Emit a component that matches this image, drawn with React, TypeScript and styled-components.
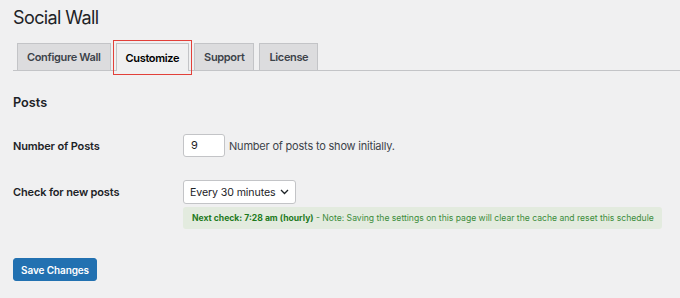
import React from "react";
import styled, { createGlobalStyle } from "styled-components";

const Global = createGlobalStyle`
  html, body { margin: 0; padding: 0; background: #f0f0f1; }
  body { font-family: Inter, "Noto Sans", "Liberation Sans", sans-serif; color: #1d2327; }
`;

const Page = styled.div`
  padding: 0 0 0 13px;
  width: 680px;
  height: 298px;
  box-sizing: border-box;
  overflow: hidden;
`;

const Title = styled.h1`
  margin: 0;
  padding-top: 5px;
  font-size: 18px;
  font-weight: 400;
  line-height: 26px;
  letter-spacing: -0.6px;
`;

const TabBar = styled.nav`
  display: flex;
  gap: 5px;
  margin-top: 12px;
  padding-left: 4px;
  border-bottom: 1px solid #c3c4c7;
  height: 28px;
  box-sizing: border-box;
`;

const Tab = styled.div<{ $active?: boolean }>`
  position: relative;
  display: flex;
  align-items: center;
  padding: 0 9px;
  height: 27px;
  box-sizing: border-box;
  border: 1px solid #c3c4c7;
  border-bottom: none;
  background: ${(p) => (p.$active ? "#f0f0f1" : "#dcdcde")};
  color: ${(p) => (p.$active ? "#000" : "#3c434a")};
  font-size: 11px;
  font-weight: 600;
  letter-spacing: -0.35px;
  ${(p) => (p.$active ? "margin-bottom: -1px; height: 28px;" : "")}
`;

const Highlight = styled.span`
  position: absolute;
  left: -4px;
  right: -4px;
  top: -4px;
  bottom: -4px;
  border: 1.5px solid #e2403a;
  pointer-events: none;
`;

const SectionTitle = styled.h2`
  margin: 24px 0 0;
  font-size: 12.7px;
  font-weight: 600;
  line-height: 16px;
`;

const Row = styled.div<{ $top: number }>`
  display: grid;
  grid-template-columns: 170px 1fr;
  align-items: start;
  margin-top: ${(p) => p.$top}px;
`;

const Label = styled.div`
  font-size: 11px;
  font-weight: 600;
  line-height: 24px;
  letter-spacing: -0.15px;
`;

const Field = styled.div`
  display: flex;
  flex-direction: column;
  align-items: flex-start;
  gap: 3px;
`;

const Inline = styled.div`
  display: flex;
  align-items: center;
  gap: 4px;
`;

const Input = styled.div`
  width: 42px;
  height: 23px;
  box-sizing: border-box;
  border: 1px solid #c3c4c7;
  border-radius: 3px;
  background: #fff;
  font-size: 11px;
  line-height: 21px;
  padding-left: 7px;
`;

const Desc = styled.span`
  font-size: 11px;
  letter-spacing: -0.2px;
  color: #3c434a;
`;

const Select = styled.div`
  display: flex;
  align-items: center;
  gap: 5px;
  height: 24px;
  box-sizing: border-box;
  border: 1px solid #c3c4c7;
  border-radius: 3px;
  background: #fff;
  font-size: 10.6px;
  letter-spacing: -0.1px;
  padding: 0 6px;
`;

const Notice = styled.div`
  width: 479px;
  height: 22px;
  box-sizing: border-box;
  border-radius: 3px;
  background: #e3ebdf;
  color: #3b8b3b;
  font-size: 8.6px;
  line-height: 22px;
  padding-left: 9px;
  white-space: nowrap;
`;

const Strong = styled.strong`
  color: #1e7a1e;
  font-weight: 700;
`;

const Button = styled.button`
  margin-top: 29px;
  display: block;
  height: 23px;
  padding: 0 7px;
  border: 1px solid #2271b1;
  border-radius: 3px;
  background: #2271b1;
  color: #fff;
  font-family: inherit;
  font-size: 10px;
  letter-spacing: -0.1px;
  font-weight: 600;
`;

export default function App() {
  return (
    <>
      <Global />
      <Page>
        <Title>Social Wall</Title>
        <TabBar>
          <Tab>Configure Wall</Tab>
          <Tab $active>
            Customize
            <Highlight />
          </Tab>
          <Tab>Support</Tab>
          <Tab>License</Tab>
        </TabBar>
        <SectionTitle>Posts</SectionTitle>
        <Row $top={23}>
          <Label>Number of Posts</Label>
          <Inline>
            <Input>9</Input>
            <Desc>Number of posts to show initially.</Desc>
          </Inline>
        </Row>
        <Row $top={22}>
          <Label>Check for new posts</Label>
          <Field>
            <Select>
              Every 30 minutes
              <svg width="9" height="6" viewBox="0 0 9 6" fill="none">
                <path d="M1 1l3.5 3.5L8 1" stroke="#1d2327" strokeWidth="1.3" />
              </svg>
            </Select>
            <Notice>
              <Strong>Next check: 7:28 am (hourly)</Strong> - Note: Saving the settings on this page will clear the cache and reset this schedule
            </Notice>
          </Field>
        </Row>
        <Button>Save Changes</Button>
      </Page>
    </>
  );
}
